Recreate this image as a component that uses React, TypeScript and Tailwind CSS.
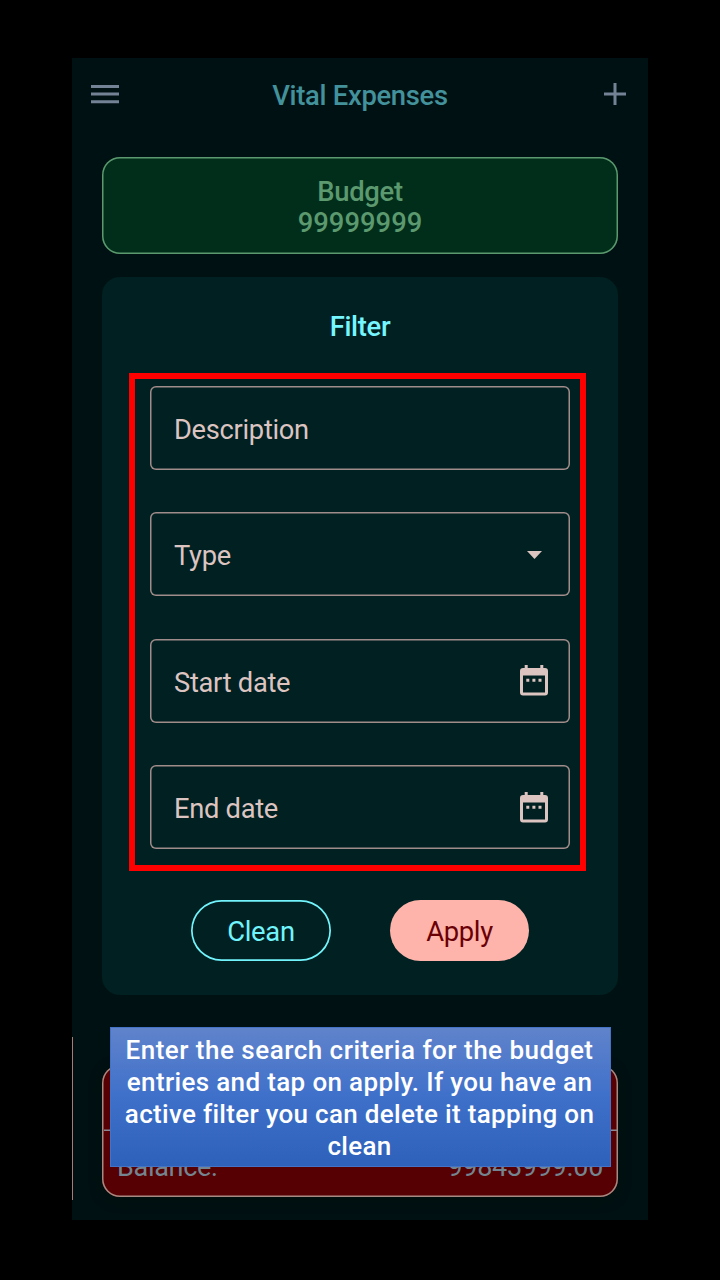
import type { ReactNode } from "react";

function CalendarIcon() {
  return (
    <svg width="28" height="31" viewBox="0 0 28 31" fill="#dcc4c1" className="block">
      <path
        fillRule="evenodd"
        d="M4.700 0h3v3h12.600V0h3v3H25a3 3 0 0 1 3 3v21.400a3 3 0 0 1-3 3H3a3 3 0 0 1-3-3V6a3 3 0 0 1 3-3h1.700zM3 10.600v16.800h22V10.600z"
      />
      <path d="M6.300 13.800h3v3h-3zM12.400 13.800h3v3h-3zM18.500 13.800h3v3h-3z" />
    </svg>
  );
}

function Field({ label, icon }: { label: string; icon?: ReactNode }) {
  return (
    <div className="flex h-[84px] items-center justify-between rounded-[6px] pr-[22px] pl-[24px] text-[27.300px] leading-8 tracking-[-0.300px] text-[#dcc4c1] shadow-[inset_0_0_0_1.500px_#a08c8a]">
      <span className="pt-[4px]">{label}</span>
      {icon}
    </div>
  );
}

export default function App() {
  return (
    <div className="h-[1280px] w-[720px] overflow-hidden bg-black pt-[58px] font-['Roboto',sans-serif]">
      <main className="relative mx-auto flex h-[1161.500px] w-[576px] flex-col bg-[#001113] px-[30px]">
        <header className="-mx-[11px] flex h-[99px] items-start justify-between">
          <svg width="28" height="19" viewBox="0 0 28 19" fill="#748295" className="mt-[26.500px]">
            <path d="M0 0h28v3H0zM0 7.600h28v3H0zM0 15.200h28v3H0z" />
          </svg>
          <h1 className="mt-[22px] ml-[-3px] text-[27.400px] leading-8 font-medium tracking-[-0.300px] text-[#43929b]">Vital Expenses</h1>
          <svg width="22" height="22" viewBox="0 0 22 22" fill="#748295" className="mt-[25px] mr-[3px]">
            <path d="M9.500 0h3v9.500H22v3h-9.500V22h-3v-9.500H0v-3h9.500z" />
          </svg>
        </header>

        <section className="h-[97px] shrink-0 rounded-[18px] bg-[#002e1a] pt-[20px] text-center text-[27.400px] leading-[31px] font-medium text-[#5c996f] shadow-[inset_0_0_0_1.500px_#5c996f]">
          <p className="tracking-[-0.300px]">Budget</p>
          <p>99999999</p>
        </section>

        <section className="mt-[23px] flex h-[718px] shrink-0 flex-col items-center rounded-[18px] bg-[#002021] pt-[34px]">
          <h2 className="text-[27.400px] leading-8 font-medium tracking-[-0.300px] text-[#76f6ff]">Filter</h2>
          <div className="mt-[30px] mr-[5px] flex h-[498px] w-[457px] shrink-0 flex-col gap-[42.500px] border-[6px] border-[#ff0000] pt-[6.500px] pr-[10px] pl-[15px]">
            <Field label="Description" />
            <Field
              label="Type"
              icon={
                <svg width="15" height="8" viewBox="0 0 15 8" fill="#dcc4c1" className="mt-[2px] mr-[6px]">
                  <path d="M0 0h15L7.500 8z" />
                </svg>
              }
            />
            <Field label="Start date" icon={<CalendarIcon />} />
            <Field label="End date" icon={<CalendarIcon />} />
          </div>
          <div className="mt-[29px] flex gap-[59px] text-[27.400px] tracking-[-0.300px]">
            <button className="h-[61px] w-[140px] rounded-full pt-[4px] text-[#72f4fc] shadow-[inset_0_0_0_1.700px_#72f4fc]">Clean</button>
            <button className="h-[61px] w-[139px] rounded-full bg-[#ffb4ab] pt-[4px] text-[#690005]">Apply</button>
          </div>
        </section>

        <section className="mt-[70px] flex h-[132px] shrink-0 flex-col rounded-[18px] bg-[#560004] text-[27px] tracking-[-0.300px] text-[#748590] shadow-[inset_0_0_0_1.500px_#a78a82,0_3px_12px_rgba(0,16,12,0.9)]">
          <div className="mx-[1.500px] h-[65.500px] shadow-[inset_0_-1.500px_0_#8c8790]" />
          <div className="flex justify-between px-[15px] pt-[20px] leading-8">
            <span>Balance:</span>
            <span>99843999.00</span>
          </div>
        </section>

        <div className="absolute top-[979px] left-0 h-[163px] w-px bg-[#a77b76]" />

        <aside className="absolute top-[969px] left-[38px] flex h-[140px] w-[501px] flex-col items-center border border-[#4472c4] bg-linear-to-b from-[#6083cb] via-[#3e70ca] to-[#2e61ba] pt-[6px] pr-[2px] text-[26px] leading-8 font-medium whitespace-nowrap text-white">
          <span className="tracking-[0.500px]">Enter the search criteria for the budget</span>
          <span className="tracking-[0.350px]">entries and tap on apply. If you have an</span>
          <span className="tracking-[0.300px]">active filter you can delete it tapping on</span>
          <span className="tracking-[0.300px]">clean</span>
        </aside>
      </main>
    </div>
  );
}
